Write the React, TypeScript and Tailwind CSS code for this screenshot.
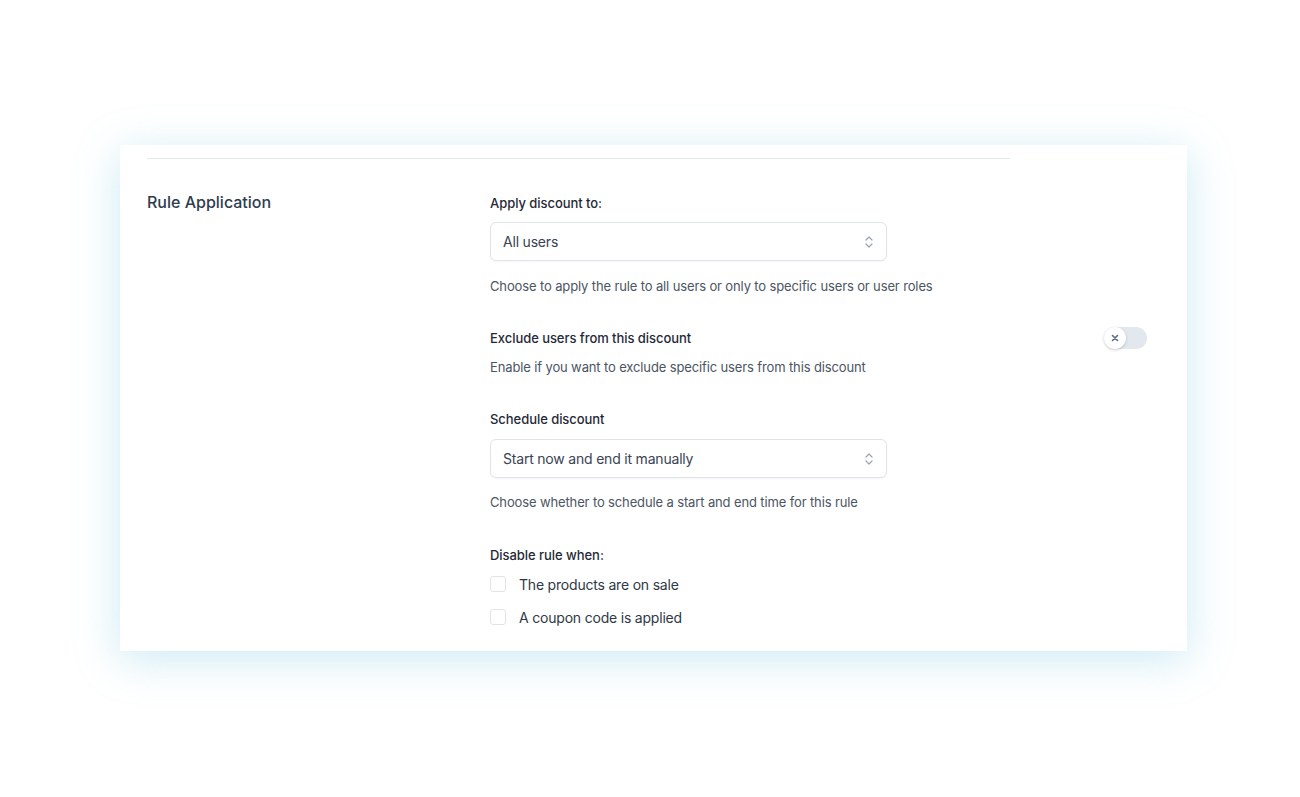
import React from "react";

const font = { fontFamily: 'Inter, "Noto Sans", sans-serif' };

function UpDown() {
  return (
    <svg width="10" height="14" viewBox="0 0 10 14" fill="none" stroke="#9aa5b4" strokeWidth="1.2" strokeLinecap="round" strokeLinejoin="round">
      <path d="M2 5 L5 2 L8 5" />
      <path d="M2 9 L5 12 L8 9" />
    </svg>
  );
}

function Select({ value }: { value: string }) {
  return (
    <div className="flex h-[39px] w-[397px] items-center justify-between rounded-[6px] border border-[#dfe4ea] bg-white pl-[12px] pr-[12px] shadow-[0_1px_2px_rgba(0,0,0,0.04)]">
      <span className="text-[14px] tracking-[-0.2px] text-[#3a4352]">{value}</span>
      <UpDown />
    </div>
  );
}

function Checkbox({ label }: { label: string }) {
  return (
    <div className="flex h-[22px] items-center gap-[13px]">
      <div className="h-[16px] w-[16px] rounded-[3px] border border-[#dfe4ea] bg-white" />
      <span className="text-[14px] tracking-[-0.2px] text-[#2f3846]">{label}</span>
    </div>
  );
}

export default function App() {
  return (
    <div className="min-h-[797px] w-[1300px] bg-white pl-[120px] pt-[145px]" style={font}>
      <div className="w-[1067px] bg-white px-[27px] pb-[23px] pt-[13px] shadow-[0_8px_40px_rgba(120,200,225,0.38)]">
        <div className="h-px w-[863px] bg-[#e5e7eb]" />
        <div className="flex pt-[31px]">
          <div className="w-[343px]">
            <h2 className="text-[16px] font-medium leading-[24px] text-[#2f3c4f]">Rule Application</h2>
          </div>
          <div className="flex w-[657px] flex-col pt-[3px]">
            <div className="text-[13px] font-medium leading-[20px] tracking-[-0.05px] text-[#1f2937]">Apply discount to:</div>
            <div className="mt-[9px]">
              <Select value="All users" />
            </div>
            <div className="mt-[15px] text-[13px] leading-[20px] tracking-[-0.13px] text-[#4b5563]">
              Choose to apply the rule to all users or only to specific users or user roles
            </div>

            <div className="mt-[31px] flex items-center justify-between">
              <div className="text-[13px] font-medium leading-[20px] tracking-[-0.05px] text-[#1f2937]">Exclude users from this discount</div>
              <div className="relative h-[22px] w-[43px] rounded-full bg-[#e3e8ef]">
                <div className="absolute left-0 top-0 flex h-[22px] w-[22px] items-center justify-center rounded-full bg-white shadow-[0_1px_3px_rgba(0,0,0,0.2)]">
                  <svg width="8" height="8" viewBox="0 0 8 8" stroke="#5b6b82" strokeWidth="1.6" strokeLinecap="round">
                    <path d="M1.5 1.5 L6.5 6.5 M6.5 1.5 L1.5 6.5" />
                  </svg>
                </div>
              </div>
            </div>
            <div className="mt-[8px] text-[13px] leading-[20px] tracking-[-0.13px] text-[#4b5563]">
              Enable if you want to exclude specific users from this discount
            </div>

            <div className="mt-[32px] text-[13px] font-medium leading-[20px] tracking-[-0.05px] text-[#1f2937]">Schedule discount</div>
            <div className="mt-[10px]">
              <Select value="Start now and end it manually" />
            </div>
            <div className="mt-[14px] text-[13px] leading-[20px] tracking-[-0.13px] text-[#4b5563]">
              Choose whether to schedule a start and end time for this rule
            </div>

            <div className="mt-[33px] text-[13px] font-medium leading-[20px] tracking-[-0.05px] text-[#1f2937]">Disable rule when:</div>
            <div className="mt-[8px] flex flex-col gap-[11px]">
              <Checkbox label="The products are on sale" />
              <Checkbox label="A coupon code is applied" />
            </div>
          </div>
        </div>
      </div>
    </div>
  );
}
